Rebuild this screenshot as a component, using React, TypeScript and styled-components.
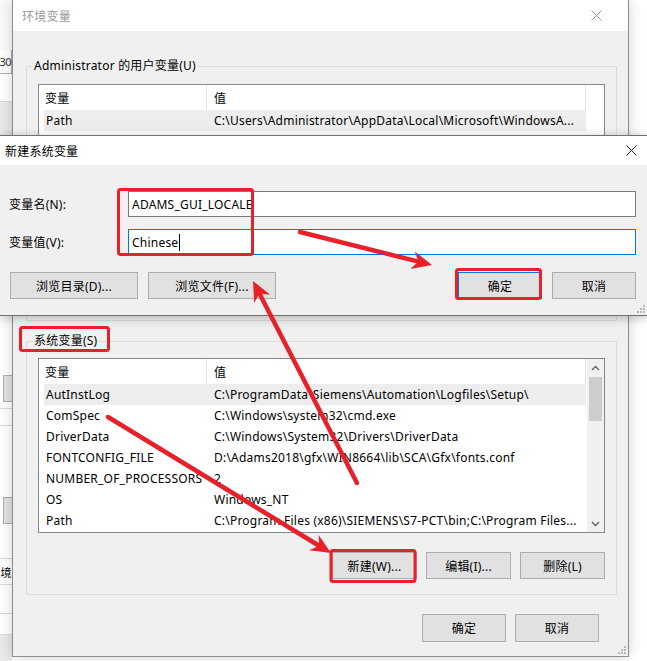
import React from 'react';
import styled, { createGlobalStyle } from 'styled-components';

type EnvVar = { name: string; value: string };

const userVars: EnvVar[] = [
  { name: 'Path', value: 'C:\\Users\\Administrator\\AppData\\Local\\Microsoft\\WindowsA...' },
];

const systemVars: EnvVar[] = [
  { name: 'AutInstLog', value: 'C:\\ProgramData\\Siemens\\Automation\\Logfiles\\Setup\\' },
  { name: 'ComSpec', value: 'C:\\Windows\\system32\\cmd.exe' },
  { name: 'DriverData', value: 'C:\\Windows\\System32\\Drivers\\DriverData' },
  { name: 'FONTCONFIG_FILE', value: 'D:\\Adams2018\\gfx\\WIN8664\\lib\\SCA\\Gfx\\fonts.conf' },
  { name: 'NUMBER_OF_PROCESSORS', value: '2' },
  { name: 'OS', value: 'Windows_NT' },
  { name: 'Path', value: 'C:\\Program Files (x86)\\SIEMENS\\S7-PCT\\bin;C:\\Program Files...' },
];

const RED = '#e8202a';
const UI_FONT = '"Noto Sans", "Noto Sans CJK SC", sans-serif';

const GlobalStyle = createGlobalStyle`
  html, body {
    margin: 0;
    padding: 0;
    background: #ffffff;
  }
  body {
    font-family: ${UI_FONT};
    font-size: 12px;
    letter-spacing: 0.22px;
    color: #000;
  }
  * {
    box-sizing: border-box;
  }
`;

const CloseIcon = ({ color }: { color: string }) => (
  <svg width="11" height="11" viewBox="0 0 11 11">
    <path d="M0.5 0.5 L10.5 10.5 M10.5 0.5 L0.5 10.5" stroke={color} strokeWidth="1" fill="none" />
  </svg>
);

const Chevron = ({ up }: { up?: boolean }) => (
  <svg width="9" height="6" viewBox="0 0 9 6">
    <path
      d={up ? 'M1 5 L4.5 1.5 L8 5' : 'M1 1 L4.5 4.5 L8 1'}
      stroke="#606060"
      strokeWidth="1.4"
      fill="none"
    />
  </svg>
);

const SizeGrip = () => (
  <svg width="8" height="8" viewBox="0 0 8 8">
    {[
      [6, 0],
      [6, 3],
      [3, 3],
      [6, 6],
      [3, 6],
      [0, 6],
    ].map(([x, y]) => (
      <rect key={`${x}-${y}`} x={x} y={y} width="2" height="2" fill="#b9b9b9" />
    ))}
  </svg>
);

// red marker arrow: shaft plus a notched head
const Arrow = ({ x1, y1, x2, y2 }: { x1: number; y1: number; x2: number; y2: number }) => {
  const len = Math.hypot(x2 - x1, y2 - y1);
  const dx = (x2 - x1) / len;
  const dy = (y2 - y1) / len;
  const nx = -dy;
  const ny = dx;
  const back = 20;
  const notch = 14;
  const wing = 9;
  const head = [
    [x2, y2],
    [x2 - dx * back + nx * wing, y2 - dy * back + ny * wing],
    [x2 - dx * notch, y2 - dy * notch],
    [x2 - dx * back - nx * wing, y2 - dy * back - ny * wing],
  ]
    .map(p => p.join(','))
    .join(' ');
  return (
    <g>
      <line
        x1={x1}
        y1={y1}
        x2={x2 - dx * notch}
        y2={y2 - dy * notch}
        stroke={RED}
        strokeWidth="4.5"
        strokeLinecap="round"
      />
      <polygon points={head} fill={RED} />
    </g>
  );
};

const ListView = ({ rows, height, scroll }: { rows: EnvVar[]; height: number; scroll?: boolean }) => (
  <ListFrame $h={height}>
    <ListBody>
      <HeaderRow>
        <HeaderCell $w={163}>变量</HeaderCell>
        <HeaderCell>值</HeaderCell>
      </HeaderRow>
      {rows.map((row, i) => (
        <Row key={row.name + i} $selected={i === 0}>
          <NameCell>{row.name}</NameCell>
          <ValueCell>{row.value}</ValueCell>
        </Row>
      ))}
    </ListBody>
    {scroll ? (
      <ScrollBar>
        <ScrollArrow>
          <Chevron up />
        </ScrollArrow>
        <ScrollThumb />
        <ScrollTrack />
        <ScrollArrow>
          <Chevron />
        </ScrollArrow>
      </ScrollBar>
    ) : (
      <Gutter />
    )}
  </ListFrame>
);

const App: React.FC = () => {
  return (
    <Page>
      <GlobalStyle />
      <BackStrip>
        <StripBand $h={50} $bg="#fafafa" />
        <StripBox>30</StripBox>
        <StripBand $h={27} />
        <StripBand $h={212} $bg="#e9e9e9" $top />
        <StripBand $h={62} $top />
        <StripButton />
        <StripBand $h={6} />
        <StripBand $h={17} $top />
        <StripBand $h={72} $top />
        <StripButton />
        <StripBand $h={34} />
        <StripText>境</StripText>
        <StripBand $h={29} $top />
        <StripBand $h={21} $top />
        <StripBand $h={28} $bg="#e9e9e9" $top />
      </BackStrip>

      <MainWindow>
        <WindowTitle>
          <span>环境变量</span>
          <CloseIcon color="#9a9a9a" />
        </WindowTitle>
        <WindowBody>
          <Group>
            <GroupLabel>Administrator 的用户变量(U)</GroupLabel>
            <ListView rows={userVars} height={226} />
          </Group>
          <Group $spaced>
            <GroupLabel>系统变量(S)</GroupLabel>
            <ListView rows={systemVars} height={175} scroll />
            <ButtonRow $top={19}>
              <WinButton $w={85} $h={27}>新建(W)...</WinButton>
              <WinButton $w={85} $h={27}>编辑(I)...</WinButton>
              <WinButton $w={85} $h={27}>删除(L)</WinButton>
            </ButtonRow>
          </Group>
          <ButtonRow $top={19} $right={18}>
            <WinButton $w={84} $h={28}>确定</WinButton>
            <WinButton $w={84} $h={28}>取消</WinButton>
          </ButtonRow>
        </WindowBody>
        <Grip>
          <SizeGrip />
        </Grip>
      </MainWindow>

      <Dialog>
        <DialogTitle>
          <span>新建系统变量</span>
          <CloseIcon color="#1a1a1a" />
        </DialogTitle>
        <DialogBody>
          <FieldGrid>
            <FieldLabel>变量名(N):</FieldLabel>
            <TextBox>ADAMS_GUI_LOCALE</TextBox>
            <FieldLabel>变量值(V):</FieldLabel>
            <TextBox $focused>
              Chinese
              <Caret />
            </TextBox>
          </FieldGrid>
          <DialogButtons>
            <ButtonGroup>
              <WinButton $w={128} $h={27}>浏览目录(D)...</WinButton>
              <WinButton $w={128} $h={27}>浏览文件(F)...</WinButton>
            </ButtonGroup>
            <ButtonGroup>
              <WinButton $w={84} $h={27} $default>确定</WinButton>
              <WinButton $w={84} $h={27}>取消</WinButton>
            </ButtonGroup>
          </DialogButtons>
        </DialogBody>
        <Grip>
          <SizeGrip />
        </Grip>
      </Dialog>

      <Marks width="647" height="661" viewBox="0 0 647 661">
        <rect x="118.5" y="189.5" width="134" height="65" rx="2" fill="none" stroke={RED} strokeWidth="3" />
        <rect x="456.5" y="269.5" width="84" height="29" rx="2" fill="none" stroke={RED} strokeWidth="3" />
        <rect x="20.5" y="327.5" width="88" height="23" rx="2" fill="none" stroke={RED} strokeWidth="3" />
        <rect x="331" y="550.5" width="84" height="31" rx="2" fill="none" stroke={RED} strokeWidth="3" />
        <Arrow x1={300} y1={232} x2={432} y2={265} />
        <Arrow x1={357} y1={483} x2={253} y2={281} />
        <Arrow x1={108} y1={417} x2={331} y2={553} />
      </Marks>
    </Page>
  );
};

export default App;

const Page = styled.div`
  position: relative;
  width: 647px;
  height: 661px;
  overflow: hidden;
  display: flex;
  align-items: flex-start;
  background: #ffffff;
`;

const BackStrip = styled.div`
  width: 12px;
  height: 661px;
  flex-shrink: 0;
  display: flex;
  flex-direction: column;
  overflow: hidden;
`;

const StripBand = styled.div<{ $h: number; $bg?: string; $top?: boolean }>`
  height: ${p => p.$h}px;
  flex-shrink: 0;
  background: ${p => p.$bg || '#ffffff'};
  border-top: ${p => (p.$top ? '1px solid #d9d9d9' : 'none')};
`;

const StripBox = styled.div`
  height: 24px;
  flex-shrink: 0;
  display: flex;
  align-items: center;
  justify-content: flex-end;
  background: #ffffff;
  border-right: 1px solid #adadad;
  border-bottom: 1px solid #adadad;
  font-size: 11px;
  letter-spacing: -0.6px;
  color: #333;
  white-space: nowrap;
`;

const StripButton = styled.div`
  height: 27px;
  flex-shrink: 0;
  margin-left: 3px;
  background: #e1e1e1;
  border: 1px solid #adadad;
  border-right: none;
`;

const StripText = styled.div`
  height: 26px;
  flex-shrink: 0;
  display: flex;
  align-items: center;
  justify-content: center;
  border-top: 1px solid #d9d9d9;
  font-size: 11px;
  letter-spacing: 0;
  white-space: nowrap;
`;

const MainWindow = styled.div`
  position: relative;
  width: 617px;
  flex-shrink: 0;
  display: flex;
  flex-direction: column;
  background: #f0f0f0;
  border: 1px solid #8c8c8c;
  border-top: none;
  box-shadow: 0 0 12px rgba(0, 0, 0, 0.18);
`;

const WindowTitle = styled.div`
  height: 31px;
  display: flex;
  align-items: center;
  justify-content: space-between;
  padding: 0 26px 0 9px;
  background: #ffffff;
  color: #9a9a9a;
`;

const WindowBody = styled.div`
  display: flex;
  flex-direction: column;
  padding: 27px 11px 14px 13px;
`;

const Group = styled.fieldset<{ $spaced?: boolean }>`
  margin: ${p => (p.$spaced ? '12px' : '0')} 0 0 0;
  padding: ${p => (p.$spaced ? '9px 11px 15px 11px' : '10px 11px 10px 11px')};
  min-width: 0;
  border: 1px solid #dcdcdc;
  display: flex;
  flex-direction: column;
`;

const GroupLabel = styled.legend`
  margin-left: -6px;
  padding: 0 2px;
  line-height: 16px;
  font-size: 12px;
`;

const ListFrame = styled.div<{ $h: number }>`
  height: ${p => p.$h}px;
  display: flex;
  background: #ffffff;
  border: 1px solid #828790;
`;

const ListBody = styled.div`
  flex: 1;
  min-width: 0;
  padding: 0 1px 0 5px;
  display: flex;
  flex-direction: column;
`;

const HeaderRow = styled.div`
  height: 25px;
  flex-shrink: 0;
  display: flex;
`;

const HeaderCell = styled.div<{ $w?: number }>`
  ${p => (p.$w ? `width: ${p.$w}px; flex-shrink: 0; padding-left: 1px;` : 'flex: 1; padding-left: 7px;')}
  display: flex;
  align-items: center;
  border-right: 1px solid #e5e5e5;
`;

const Row = styled.div<{ $selected?: boolean }>`
  height: 21px;
  flex-shrink: 0;
  display: flex;
  align-items: center;
  background: ${p => (p.$selected ? '#ededed' : 'transparent')};
  white-space: nowrap;
`;

const NameCell = styled.div`
  width: 163px;
  flex-shrink: 0;
  padding-left: 2px;
  overflow: hidden;
`;

const ValueCell = styled.div`
  flex: 1;
  min-width: 0;
  padding-left: 7px;
  overflow: hidden;
`;

const Gutter = styled.div`
  width: 17px;
  flex-shrink: 0;
`;

const ScrollBar = styled.div`
  width: 17px;
  flex-shrink: 0;
  display: flex;
  flex-direction: column;
  background: #f0f0f0;
`;

const ScrollArrow = styled.div`
  height: 17px;
  flex-shrink: 0;
  display: flex;
  align-items: center;
  justify-content: center;
`;

const ScrollThumb = styled.div`
  height: 44px;
  margin: 1px 2px 0;
  flex-shrink: 0;
  background: #cdcdcd;
`;

const ScrollTrack = styled.div`
  flex: 1;
`;

const ButtonRow = styled.div<{ $top: number; $right?: number }>`
  display: flex;
  justify-content: flex-end;
  gap: 9px;
  margin-top: ${p => p.$top}px;
  margin-right: ${p => p.$right || 0}px;
`;

const WinButton = styled.button<{ $w: number; $h: number; $default?: boolean }>`
  width: ${p => p.$w}px;
  height: ${p => p.$h}px;
  padding: 0;
  font-family: ${UI_FONT};
  font-size: 12px;
  letter-spacing: 0.22px;
  color: #000;
  background: #e1e1e1;
  border: 1px solid ${p => (p.$default ? '#0078d7' : '#adadad')};
  border-radius: 0;
`;

const Grip = styled.div`
  position: absolute;
  right: 2px;
  bottom: 2px;
  width: 8px;
  height: 8px;
  display: flex;
`;

const Dialog = styled.div`
  position: absolute;
  top: 135px;
  left: 0;
  width: 647px;
  background: #f0f0f0;
  border-top: 1px solid #6f6f6f;
  border-bottom: 1px solid #6f6f6f;
  box-shadow: 0 2px 10px rgba(0, 0, 0, 0.25);
`;

const DialogTitle = styled.div`
  height: 29px;
  display: flex;
  align-items: center;
  justify-content: space-between;
  padding: 0 10px 0 5px;
  background: #ffffff;
`;

const DialogBody = styled.div`
  padding: 26px 11px 16px 9px;
`;

const FieldGrid = styled.div`
  display: grid;
  grid-template-columns: 119px 1fr;
  row-gap: 12px;
  align-items: center;
`;

const FieldLabel = styled.div`
  white-space: nowrap;
`;

const TextBox = styled.div<{ $focused?: boolean }>`
  height: 26px;
  display: flex;
  align-items: center;
  padding: 0 3px;
  background: #ffffff;
  border: 1px solid ${p => (p.$focused ? '#0078d7' : '#7a7a7a')};
  white-space: nowrap;
`;

const Caret = styled.span`
  width: 1px;
  height: 17px;
  margin-left: 1px;
  background: #000;
`;

const DialogButtons = styled.div`
  display: flex;
  justify-content: space-between;
  margin-top: 17px;
  padding-left: 1px;
`;

const ButtonGroup = styled.div`
  display: flex;
  gap: 10px;
`;

const Marks = styled.svg`
  position: absolute;
  top: 0;
  left: 0;
  pointer-events: none;
`;
